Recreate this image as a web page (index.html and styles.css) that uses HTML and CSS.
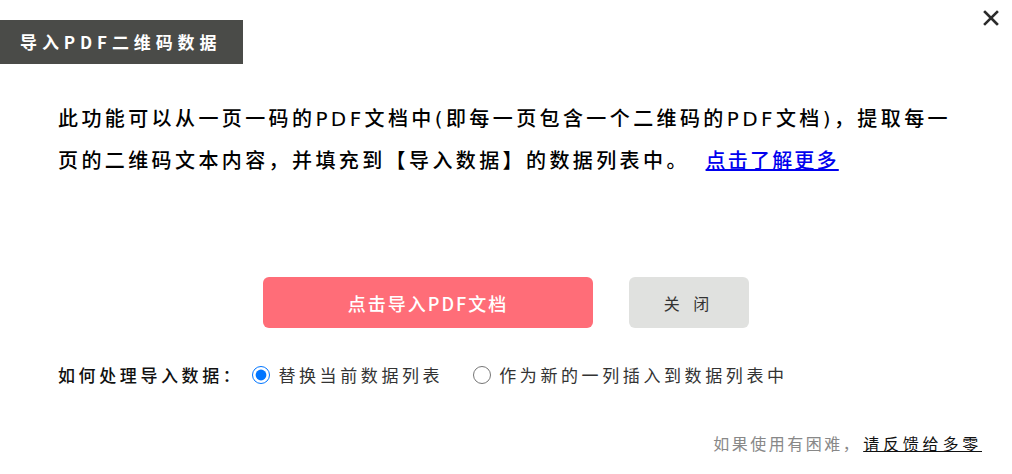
FILE: index.html
```html
<!DOCTYPE html>
<html lang="zh-CN">

<head>
    <meta charset="UTF-8">
    <meta name="viewport" content="width=device-width, initial-scale=1.0">
    <title>导入PDF二维码数据</title>
    <link rel="stylesheet" href="styles.css">
</head>

<body>
    <div class="dialog">
        <div class="top">
            <h1 class="title">导入PDF二维码数据</h1>
            <button class="close" title="关闭">
                <svg width="16" height="16" viewBox="0 0 16 16">
                    <path d="M2 2 L14 14 M14 2 L2 14" stroke="#2b2b2b" stroke-width="2.6" stroke-linecap="square" fill="none"/>
                </svg>
            </button>
        </div>

        <p class="intro">此功能可以从一页一码的PDF文档中(即每一页包含一个二维码的PDF文档)，提取每一页的二维码文本内容，并填充到【导入数据】的数据列表中。 <a class="more" href="#">点击了解更多</a></p>

        <div class="actions">
            <button class="btn-import">点击导入PDF文档</button>
            <button class="btn-cancel">关 闭</button>
        </div>

        <div class="mode">
            <span class="mode-label">如何处理导入数据：</span>
            <label class="option"><input type="radio" name="mode" checked>替换当前数据列表</label>
            <label class="option"><input type="radio" name="mode">作为新的一列插入到数据列表中</label>
        </div>

        <div class="help">如果使用有困难，<a href="#">请反馈给多零</a></div>
    </div>
</body>

</html>
```

FILE: styles.css
```css
body {
    margin: 0;
    background-color: #ffffff;
    font-family: "Noto Sans CJK SC", sans-serif;
    color: #111111;
}

.top {
    display: flex;
    justify-content: space-between;
    align-items: flex-start;
}

.title {
    box-sizing: border-box;
    width: 243px;
    height: 44px;
    margin: 20px 0 0;
    padding-left: 20px;
    background-color: #4a4b48;
    color: #ffffff;
    font-size: 17px;
    font-weight: 700;
    line-height: 44px;
    letter-spacing: 4.9px;
}

.close {
    margin: 10px 13px 0 0;
    padding: 0;
    border: none;
    background: none;
    cursor: pointer;
    line-height: 0;
}

.intro {
    width: 905px;
    margin: 34px 0 0 58px;
    font-family: "DejaVu Sans", "Noto Sans CJK SC", sans-serif;
    font-size: 20px;
    font-weight: 500;
    line-height: 42px;
    letter-spacing: 3.4px;
    color: #000000;
}

.intro .more {
    margin-left: 6px;
    color: #0000ee;
    letter-spacing: 2.2px;
}

.actions {
    display: flex;
    justify-content: center;
    gap: 36px;
    margin-top: 95px;
}

.actions button {
    height: 51px;
    border: none;
    border-radius: 6px;
    font-family: "Noto Sans CJK SC", sans-serif;
    cursor: pointer;
}

.btn-import {
    width: 330px;
    background-color: #ff6d78;
    color: #ffffff;
    font-size: 18px;
    font-weight: 500;
    letter-spacing: 2px;
}

.btn-cancel {
    width: 120px;
    background-color: #e0e1df;
    color: #333333;
    font-size: 16px;
    letter-spacing: 5px;
}

.mode {
    display: flex;
    align-items: center;
    margin: 35px 0 0 58px;
    font-size: 17px;
    line-height: 24px;
    letter-spacing: 3.6px;
}

.mode-label {
    font-weight: 500;
    color: #111111;
}

.option {
    display: flex;
    align-items: center;
    margin-right: 30px;
    color: #333333;
    cursor: pointer;
}

.option input {
    width: 18px;
    height: 18px;
    margin: 0 8px 0 9px;
}

.option + .option input {
    margin-left: 0;
}

.help {
    margin: 44px 30px 0 0;
    text-align: right;
    font-size: 16px;
    line-height: 24px;
    letter-spacing: 2.5px;
    color: #888888;
}

.help a {
    margin-left: 2px;
    color: #111111;
    letter-spacing: 3.8px;
}
```
